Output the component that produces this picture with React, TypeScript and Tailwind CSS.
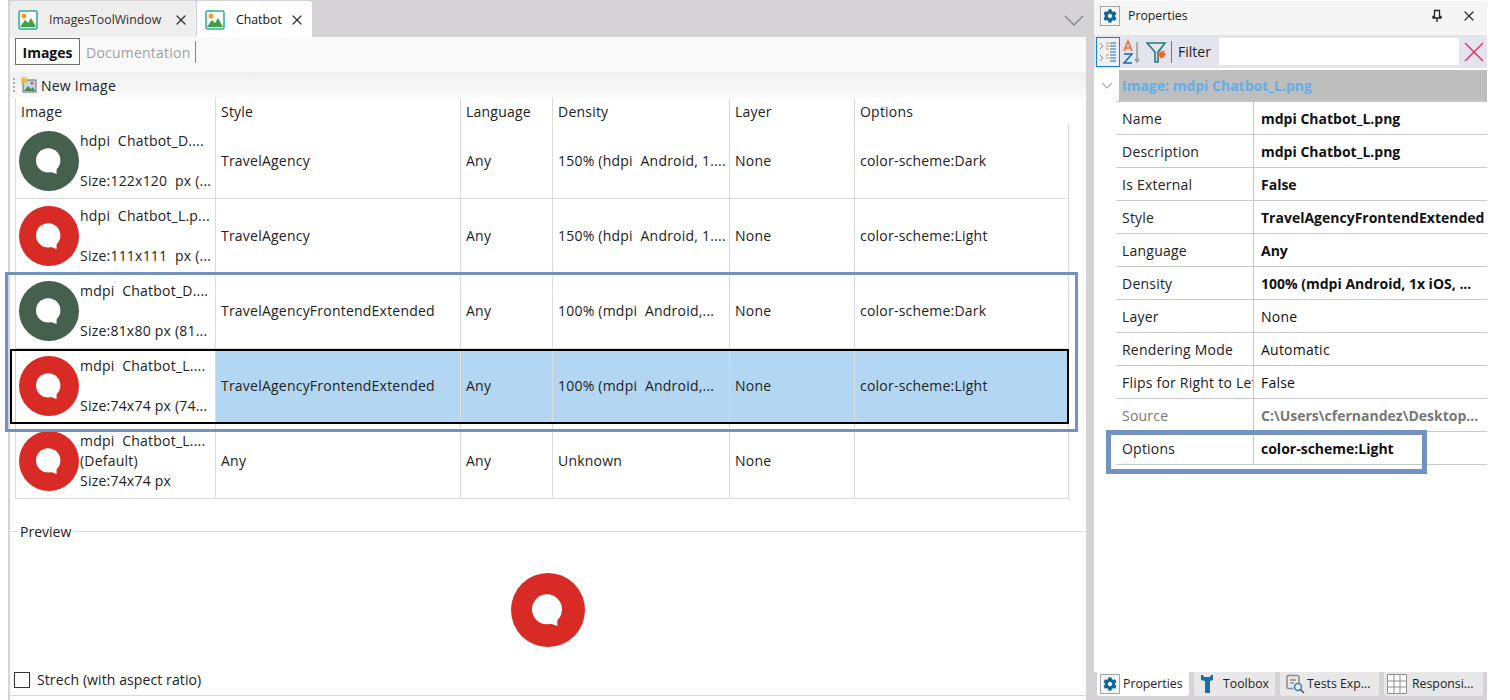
import { FaCog } from 'react-icons/fa'
import { X } from 'lucide-react'

const COLS = 'grid grid-cols-[200px_245px_92px_177px_125px_214px]'

const ROWS = [
  { name: 'hdpi  Chatbot_D....', size: 'Size:122x120  px (...', style: 'TravelAgency', density: '150% (hdpi  Android, 1....', layer: 'None', options: 'color-scheme:Dark', dark: true },
  { name: 'hdpi  Chatbot_L.p...', size: 'Size:111x111  px (...', style: 'TravelAgency', density: '150% (hdpi  Android, 1....', layer: 'None', options: 'color-scheme:Light' },
  { name: 'mdpi  Chatbot_D....', size: 'Size:81x80 px (81...', style: 'TravelAgencyFrontendExtended', density: '100% (mdpi  Android,...', layer: 'None', options: 'color-scheme:Dark', dark: true },
  { name: 'mdpi  Chatbot_L....', size: 'Size:74x74 px (74...', style: 'TravelAgencyFrontendExtended', density: '100% (mdpi  Android,...', layer: 'None', options: 'color-scheme:Light', selected: true },
  { name: 'mdpi  Chatbot_L....', extra: '(Default)', size: 'Size:74x74 px', style: 'Any', density: 'Unknown', layer: 'None', options: '' },
]

const PROPS = [
  { label: 'Name', value: 'mdpi Chatbot_L.png', bold: true },
  { label: 'Description', value: 'mdpi Chatbot_L.png', bold: true },
  { label: 'Is External', value: 'False', bold: true },
  { label: 'Style', value: 'TravelAgencyFrontendExtended', bold: true },
  { label: 'Language', value: 'Any', bold: true },
  { label: 'Density', value: '100% (mdpi Android, 1x iOS, ...', bold: true },
  { label: 'Layer', value: 'None' },
  { label: 'Rendering Mode', value: 'Automatic' },
  { label: 'Flips for Right to Left', value: 'False' },
  { label: 'Source', value: 'C:\\Users\\cfernandez\\Desktop...', bold: true, muted: true },
  { label: 'Options', value: 'color-scheme:Light', bold: true },
]

function ChatLogo({ size, dark }: { size: number; dark?: boolean }) {
  return (
    <svg width={size} height={size} viewBox="0 0 74 74" className="shrink-0">
      <circle cx="37" cy="37" r="37" fill={dark ? '#45604c' : '#d92b25'} />
      <circle cx="36" cy="36.300" r="15" fill="#fff" />
      <path d="M38 50l8.300 3v-7z" fill="#fff" />
    </svg>
  )
}

function PictureIcon() {
  return (
    <svg width="20" height="20" viewBox="0 0 20 20" className="shrink-0">
      <rect x="1" y="1" width="18" height="18" rx="1.500" fill="#fff" stroke="#2fa99a" strokeWidth="1.500" />
      <circle cx="6" cy="6" r="2.500" fill="#f59a23" />
      <path d="M2 17l5-7 3 3 3-5 5 9z" fill="#3fa142" />
    </svg>
  )
}

function NewImageIcon() {
  return (
    <svg width="16" height="16" viewBox="0 0 16 16" className="shrink-0">
      <rect x="2" y="3" width="13" height="12" fill="#bcd9ef" stroke="#66707a" />
      <path d="M3 14l4-5 3 3 2-2 2 4z" fill="#4f8a4c" />
      <circle cx="11" cy="6" r="1.500" fill="#d9534f" />
      <path d="M0 0h6v6H0z" fill="#f2c230" opacity=".8" />
    </svg>
  )
}

function PropertiesGear() {
  return (
    <span className="w-5 h-5 flex items-center justify-center border border-[#a5a5a5] bg-[#f8f8f8] shrink-0">
      <FaCog className="w-3.5 h-3.5 text-[#0f659c]" />
    </span>
  )
}

function Tab({ label, active }: { label: string; active?: boolean }) {
  return (
    <div className={`flex items-center h-9 mt-px pt-[2px] rounded-t-[3px] pl-2 ${active ? 'bg-white w-[115px] text-[#111]' : 'bg-[#eeeeee] w-[186px] mr-px text-[#3a2a2a]'}`}>
      <PictureIcon />
      <span className="ml-[11px] text-[12.300px] tracking-normal">{label}</span>
      <X className="w-4 h-4 ml-auto mr-[7px] text-[#333]" strokeWidth={1.800} />
    </div>
  )
}

function ImageTable() {
  return (
    <div className="ml-[5px] w-[1054px] text-[14px] text-[#222]">
      <div className={`${COLS} h-[26px] items-center border-l border-[#dcdcdc]`}>
        {['Image', 'Style', 'Language', 'Density', 'Layer', 'Options'].map((h, i) => (
          <div key={h} className={`h-full flex items-center pl-[5px] ${i < 5 ? 'border-r border-[#dcdcdc]' : ''}`}>{h}</div>
        ))}
      </div>
      {ROWS.map((r) => {
        const cell = `flex items-center pl-[5px] pb-[2px] border-r border-[#dcdcdc] whitespace-pre ${r.selected ? 'bg-[#b3d7f3]' : ''}`
        return (
          <div key={r.name + r.size} className={`${COLS} h-[75px] border-b border-l ${r.selected ? 'border-l-[#b3d7f3]' : 'border-l-[#dcdcdc]'} border-b-[#dcdcdc]`}>
            <div className="flex items-center gap-[1px] pl-[3px] border-r border-[#dcdcdc] overflow-hidden">
              <ChatLogo size={60} dark={r.dark} />
              <div className="leading-5 whitespace-pre">
                <div>{r.name}</div>
                <div className="h-5">{r.extra}</div>
                <div>{r.size}</div>
              </div>
            </div>
            <div className={cell}>{r.style}</div>
            <div className={cell}>Any</div>
            <div className={cell}>{r.density}</div>
            <div className={cell}>{r.layer}</div>
            <div className={cell}>{r.options}</div>
          </div>
        )
      })}
    </div>
  )
}

function PropertiesPanel() {
  return (
    <div className="w-[393px] flex flex-col bg-white text-[14px] text-[#222] shrink-0">
      <div className="h-[34px] mt-px flex items-center bg-[#f5f5f5] pl-[6px] pr-[10px] pb-[4px] shrink-0">
        <PropertiesGear />
        <span className="ml-[8px] text-[12.300px] tracking-normal">Properties</span>
        <svg width="12" height="14" viewBox="0 0 12 14" className="ml-auto">
          <path d="M3.500 1.500h5v6h1.500v1.500h-8v-1.500h1.500zM6 9v4" fill="none" stroke="#222" strokeWidth="1.300" />
        </svg>
        <X className="w-4 h-4 ml-[18px] text-[#333]" strokeWidth={1.800} />
      </div>
      <div className="h-[33px] flex items-center bg-[#e4e4ee] pl-[2px] shrink-0">
        <span className="w-6 h-[30px] flex items-center justify-center border border-[#1380d0] bg-[#eef0f6]">
          <svg width="20" height="24" viewBox="0 0 20 24">
            <path d="M2 3l3 3-3 3M2 15l3 3-3 3" fill="none" stroke="#888" />
            <path d="M8 3h3M8 6h3M8 9h3M8 15h3M8 18h3" stroke="#e88a3c" strokeWidth="1.200" />
            <path d="M12 3h6M12 6h6M12 9h6M12 12h6M12 15h6M12 18h6M12 21h6" stroke="#1d6fb0" strokeWidth="1.200" />
          </svg>
        </span>
        <svg width="20" height="26" viewBox="0 0 20 26" className="ml-[2px]">
          <path d="M2 12l4-10 4 10M3.500 9h5" fill="none" stroke="#ee6b2d" strokeWidth="1.500" />
          <path d="M2 15h8l-8 9h8" fill="none" stroke="#126aa8" strokeWidth="1.500" />
          <path d="M15 3v20M13 20l2 3 2-3" fill="none" stroke="#999" strokeWidth="1.500" />
        </svg>
        <svg width="22" height="24" viewBox="0 0 22 24" className="ml-[4px]">
          <path d="M1 3h18l-7 9v10h-3V12z" fill="none" stroke="#1e7b78" strokeWidth="1.600" />
          <path d="M15 9l1.500 2.500 2.500-1-1 2.500 2.500 1.500-2.500 1 .5 2.500-2.500-1-2 2-.5-3-2.500-1 2.500-1.500-.5-2.500 2.500 1z" fill="#f26522" />
        </svg>
        <span className="ml-[3px] w-px h-[22px] bg-[#777]" />
        <span className="ml-[6px] tracking-normal">Filter</span>
        <div className="ml-[8px] w-[240px] h-[27px] bg-white" />
        <svg width="20" height="20" viewBox="0 0 20 20" className="ml-[5px]">
          <path d="M1 1l18 18M19 1L1 19" stroke="#e8315f" strokeWidth="1.500" />
        </svg>
      </div>
      <div className="flex h-[31px] mt-[2px] shrink-0">
        <div className="w-[25px] flex items-center justify-center">
          <svg width="12" height="8" viewBox="0 0 12 8">
            <path d="M1 1l5 5 5-5" fill="none" stroke="#a9b1bb" strokeWidth="1.200" />
          </svg>
        </div>
        <div className="flex-1 bg-[#bebebe] flex items-center pl-[3px] font-bold tracking-normal text-[#63aee6]">Image: mdpi Chatbot_L.png</div>
      </div>
      <div className="ml-[22px] border-t border-[#c8c8c8] shrink-0">
        {PROPS.map((p) => (
          <div key={p.label} className="flex h-[33px] border-b border-[#c8c8c8]">
            <div className={`w-[138px] flex items-center pl-[6px] border-r border-[#c8c8c8] whitespace-nowrap overflow-hidden ${p.muted ? 'text-[#777]' : ''}`}>{p.label}</div>
            <div className={`flex-1 flex items-center pl-[7px] whitespace-nowrap overflow-hidden ${p.bold ? 'font-bold tracking-normal' : ''} ${p.muted ? 'text-[#777]' : 'text-[#111]'}`}>{p.value}</div>
          </div>
        ))}
      </div>
      <div className="flex-1" />
      <div className="h-[28px] bg-[#d5d3d5] flex items-start gap-[5px] pl-[3px] text-[12.300px] tracking-normal shrink-0">
        <div className="w-[92px] h-6 bg-white rounded-b-[3px] flex items-center pl-[3px]">
          <PropertiesGear />
          <span className="ml-[3px]">Properties</span>
        </div>
        <div className="w-[81px] h-6 bg-[#e8e8e8] rounded-b-[3px] flex items-center pl-[6px]">
          <svg width="14" height="20" viewBox="0 0 14 20"><path d="M1 1h2l1 2h6l1-2h2v5l-3 1v12H5V7L1 6z" fill="#1a6fa8" /></svg>
          <span className="ml-[9px]">Toolbox</span>
        </div>
        <div className="w-[99px] h-6 bg-[#e8e8e8] rounded-b-[3px] flex items-center pl-[5px]">
          <svg width="20" height="20" viewBox="0 0 20 20" className="shrink-0">
            <path d="M14 9V3a1.500 1.500 0 0 0-1.500-1.500h-9A1.500 1.500 0 0 0 2 3v10a1.500 1.500 0 0 0 1.500 1.500H8" fill="none" stroke="#8a8a8a" strokeWidth="1.500" />
            <path d="M5 6h6M5 9h4" stroke="#8a8a8a" strokeWidth="1.300" />
            <circle cx="13" cy="13" r="3.500" fill="none" stroke="#2f7fb5" strokeWidth="1.500" />
            <path d="M15.500 15.500L19 19" stroke="#555" strokeWidth="1.600" />
          </svg>
          <span className="ml-[2px]">Tests Exp...</span>
        </div>
        <div className="w-[99px] h-6 bg-[#e8e8e8] rounded-b-[3px] flex items-center pl-[3px]">
          <svg width="20" height="20" viewBox="0 0 20 20" className="shrink-0">
            <path d="M.5.500h19v19H.500zM.5 7h19M.5 13h19M7 .5v19M13 .5v19" fill="#fff" stroke="#8f8f8f" />
          </svg>
          <span className="ml-[5px]">Responsi...</span>
        </div>
      </div>
    </div>
  )
}

export default function App() {
  return (
    <div className="relative w-[1510px] h-[700px] bg-white flex overflow-hidden font-['Open_Sans',sans-serif] tracking-[0.22px]">
      <div className="w-[1479px] h-full ml-2 pl-[2px] bg-[#d5d3d5] flex">
        <div className="w-[1076px] flex flex-col shrink-0 text-[#222]">
          <div className="h-[37px] flex shrink-0">
            <Tab label="ImagesToolWindow" />
            <Tab label="Chatbot" active />
            <svg width="20" height="12" viewBox="0 0 20 12" className="ml-auto mr-[2px] mt-[15px]">
              <path d="M1 1l9 9 9-9" fill="none" stroke="#7f8a90" strokeWidth="1.400" />
            </svg>
          </div>
          <div className="h-[35px] bg-[#f9f9f9] flex items-start pl-[5px] pt-px text-[14px] shrink-0">
            <span className="h-[27px] w-[65px] pt-px flex items-center justify-center border border-[#707070] bg-white font-bold tracking-normal text-[#111]">Images</span>
            <span className="ml-[6px] h-[27px] pt-px flex items-center text-[#a0a0a0]">Documentation</span>
            <span className="ml-[5px] mt-[3px] w-px h-[22px] bg-[#888]" />
          </div>
          <div className="h-[26px] bg-gradient-to-b from-[#f0f0f0] to-[#fafafa] flex items-center pl-[3px] text-[14px] shrink-0">
            <span className="w-px h-3.5 border-l-2 border-dotted border-[#aaa]" />
            <span className="ml-[6px]"><NewImageIcon /></span>
            <span className="ml-[4px]">New Image</span>
          </div>
          <div className="flex-1 bg-white flex flex-col">
            <ImageTable />
            <div className="mt-[22px] flex items-center text-[14px] tracking-normal">
              <span className="w-[7px] h-px bg-[#d9d9d9]" />
              <span className="px-[3px]">Preview</span>
              <span className="flex-1 h-px bg-[#d9d9d9]" />
            </div>
            <div className="flex justify-center pt-[31px]">
              <ChatLogo size={74} />
            </div>
            <div className="mt-[22px] flex items-center pl-[4px] text-[14px] tracking-[0.1px]">
              <span className="w-4 h-4 border border-[#333] bg-white" />
              <span className="ml-[7px]">Strech (with aspect ratio)</span>
            </div>
            <div className="flex-1" />
            <div className="h-px bg-[#d9d9d9] mb-[4px]" />
          </div>
        </div>
        <div className="w-2 shrink-0" />
        <PropertiesPanel />
      </div>
      <div className="absolute left-[5px] top-[272px] w-[1073px] h-[160px] border-[3px] border-[#7193bd]" />
      <div className="absolute left-[10px] top-[349px] w-[1059px] h-[75px] border-2 border-black" />
      <div className="absolute left-[1106px] top-[430px] w-[321px] h-[44px] border-[5px] border-[#7193bd]" />
    </div>
  )
}
